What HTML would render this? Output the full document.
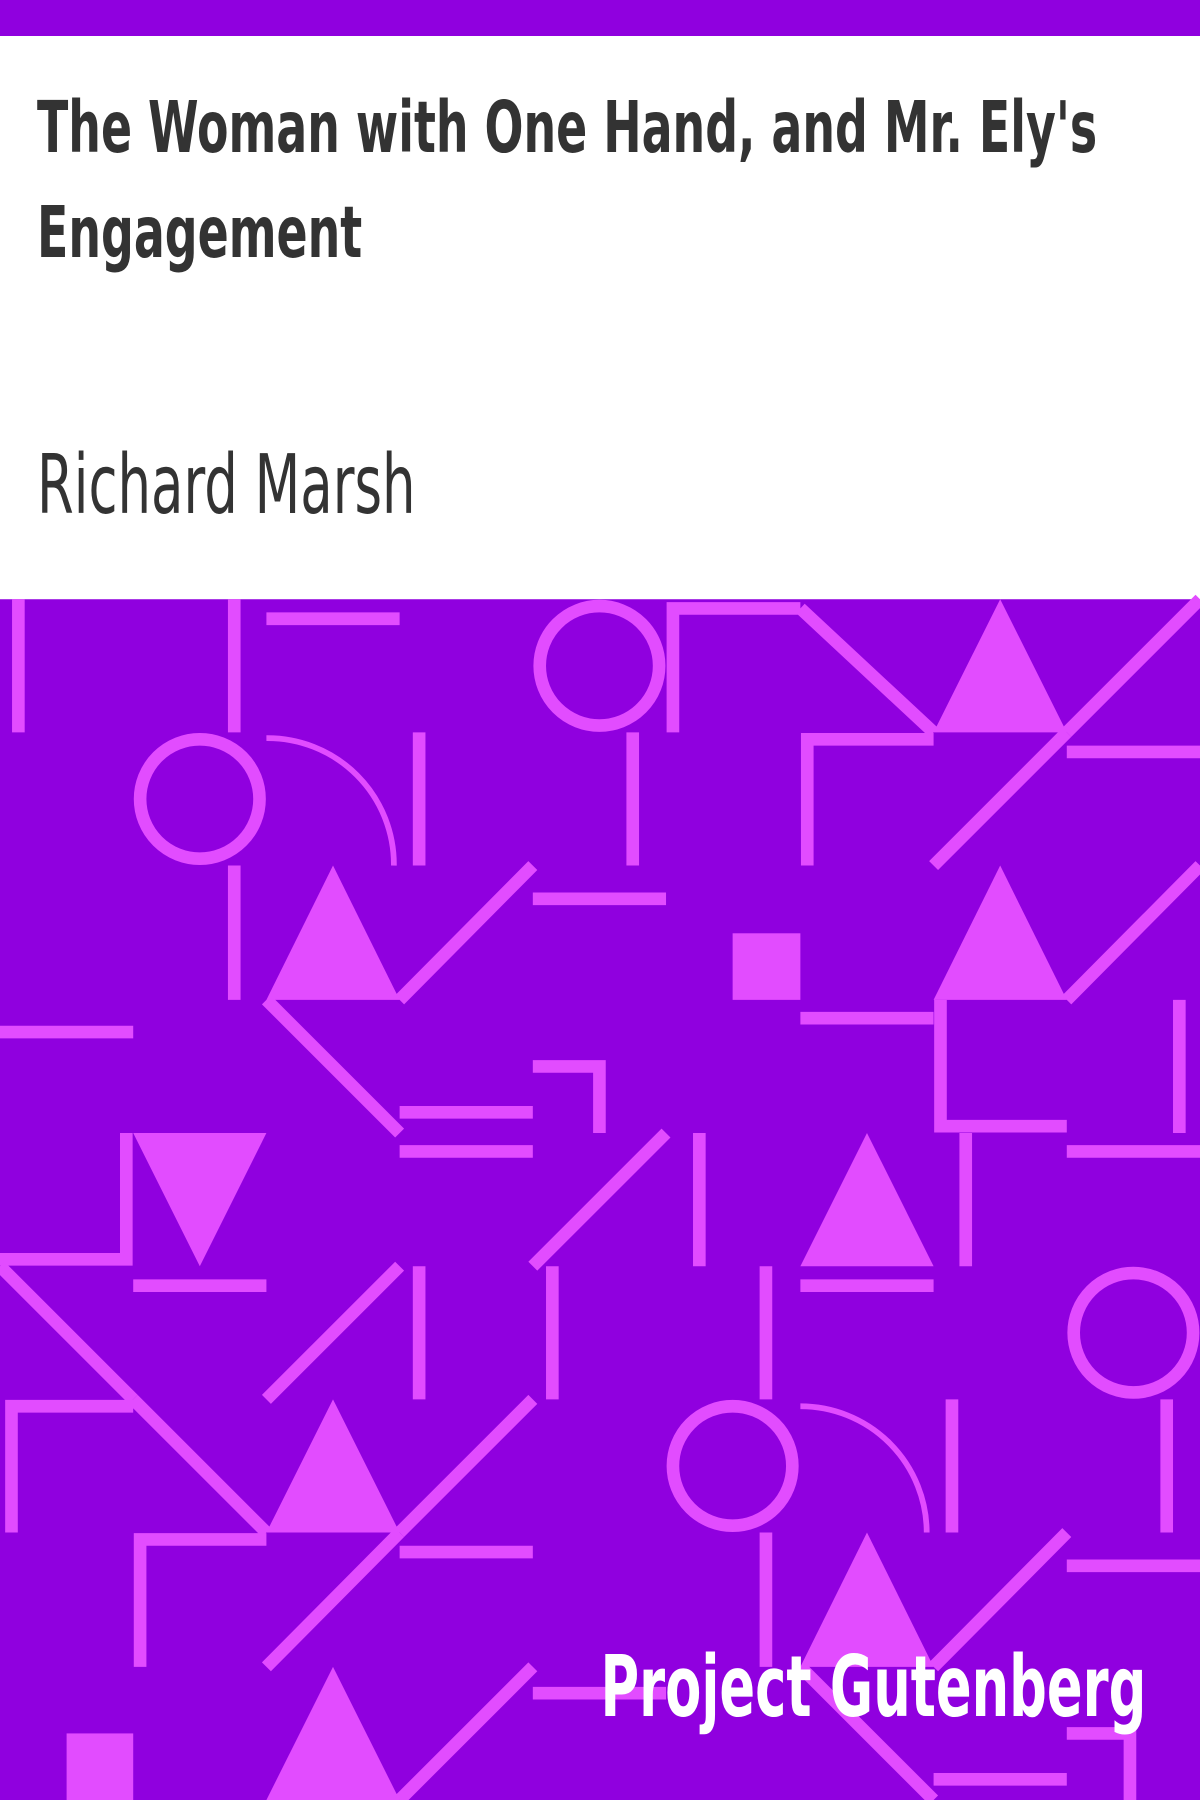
<!DOCTYPE html>
<html><head><meta charset="utf-8"><style>
html,body{margin:0;padding:0;width:1200px;height:1800px;overflow:hidden;background:#fff}
.bar{position:absolute;left:0;top:0;width:1200px;height:36px;background:#9000df}
.title{position:absolute;left:37px;top:75px;width:1760px;font-family:"DejaVu Sans",sans-serif;font-weight:bold;font-size:71px;line-height:105px;color:#333;transform:scaleX(0.646);transform-origin:0 0;}
.author{position:absolute;left:37px;top:438px;white-space:nowrap;font-family:"DejaVu Sans",sans-serif;font-size:82px;color:#333;transform:scaleX(0.645);transform-origin:0 0;}
svg{position:absolute;left:0;top:0}
.pg{position:absolute;right:54px;top:1638px;white-space:nowrap;font-family:"DejaVu Sans",sans-serif;font-weight:bold;font-size:85px;color:#fff;transform:scaleX(0.62);transform-origin:100% 0;}
</style></head><body>
<div class="bar"></div>
<div class="title">The Woman with One Hand, and Mr. Ely's Engagement</div>
<div class="author">Richard Marsh</div>
<svg width="1200" height="1800" viewBox="0 0 1045 1568" preserveAspectRatio="none">
<rect x="0" y="522" width="1045" height="1046" fill="#9000df"/>
<g stroke="#e24cff" stroke-width="11" fill="none">
<path d="M16 522V638M204 522V638M232 539H348M586 638V530H697M697 530L813 638M1045 522L929 638"/>
<circle cx="522" cy="580" r="52"/>
<circle cx="174" cy="696" r="52"/>
<path d="M232 643A110 110 0 0 1 343 754" stroke-width="5"/>
<path d="M365 638V754M551 638V754M703 754V644H813M929 638L813 754M929 655H1045"/>
<path d="M204 754V871M464 754L348 871M464 783H580M1045 754L929 871"/>
<path d="M0 899H116M232 871L348 987M464 929H522V987M697 887H813M819 871V981H929M1027 871V987M348 969H464"/>
<path d="M110 987V1097H0M348 1003H464M580 987L464 1103M609 987V1103M841 987V1103M929 1003H1045"/>
<path d="M0 1103L116 1219M116 1120H232M348 1103L232 1219M365 1103V1219M481 1103V1219M667 1103V1219M697 1120H813"/>
<circle cx="987" cy="1161" r="52"/>
<path d="M10 1335V1225H116M116 1219L232 1335M464 1219L348 1335M829 1219V1335M1016 1219V1335"/>
<circle cx="638" cy="1277" r="52"/>
<path d="M697 1225A110 110 0 0 1 807 1335" stroke-width="5"/>
<path d="M122 1452V1341H232M348 1335L232 1452M348 1352H464M667 1335V1452M929 1335L813 1452M929 1364H1045"/>
<path d="M464 1452L348 1568M464 1475H580M697 1452L813 1568M813 1550H929M929 1510H984V1568"/>
</g>
<g fill="#e24cff">
<polygon points="813,638 871,522 929,638"/>
<polygon points="232,871 290,754 348,871"/>
<rect x="638" y="813" width="59" height="58"/>
<polygon points="813,871 871,754 929,871"/>
<polygon points="116,987 232,987 174,1103"/>
<polygon points="697,1103 755,987 813,1103"/>
<polygon points="232,1335 290,1219 348,1335"/>
<polygon points="697,1452 755,1335 813,1452"/>
<rect x="58" y="1510" width="58" height="58"/>
<polygon points="232,1568 290,1452 348,1568"/>
</g>
</svg>
<div class="pg">Project Gutenberg</div>
</body></html>
